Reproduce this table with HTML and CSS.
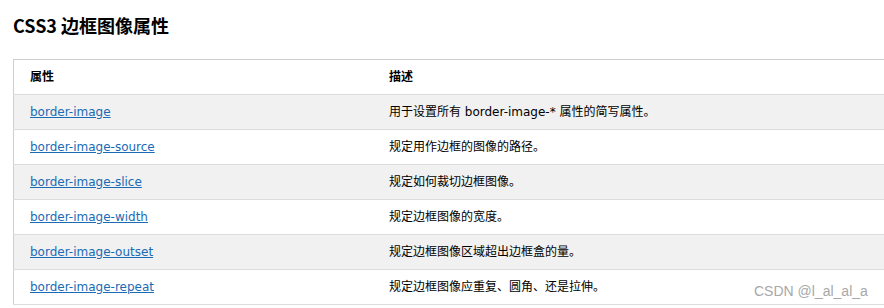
FILE: index.html
```html
<!DOCTYPE html>
<html lang="zh">
<head>
<meta charset="utf-8">
<title>CSS3 边框图像属性</title>
<link rel="stylesheet" href="styles.css">
</head>
<body>
<div class="page">
  <h2 class="title">CSS3 边框图像属性</h2>
  <table class="ref">
    <thead>
      <tr><th class="c1">属性</th><th class="c2">描述</th></tr>
    </thead>
    <tbody>
      <tr class="alt"><td><a href="#">border-image</a></td><td>用于设置所有 border-image-* 属性的简写属性。</td></tr>
      <tr><td><a href="#">border-image-source</a></td><td>规定用作边框的图像的路径。</td></tr>
      <tr class="alt"><td><a href="#">border-image-slice</a></td><td>规定如何裁切边框图像。</td></tr>
      <tr><td><a href="#">border-image-width</a></td><td>规定边框图像的宽度。</td></tr>
      <tr class="alt"><td><a href="#">border-image-outset</a></td><td>规定边框图像区域超出边框盒的量。</td></tr>
      <tr><td><a href="#">border-image-repeat</a></td><td>规定边框图像应重复、圆角、还是拉伸。</td></tr>
    </tbody>
  </table>
  <span class="watermark">CSDN @l_al_al_a</span>
</div>
</body>
</html>
```
FILE: styles.css
```css
html, body {
  margin: 0;
  padding: 0;
  background: #fff;
  overflow: hidden;
}
.page {
  position: relative;
  padding: 13px 0 0 13px;
  width: 871px;
  height: 295px;
  font-family: "DejaVu Sans", "Noto Sans CJK SC", sans-serif;
  color: #000;
}
.title {
  margin: 0 0 21px;
  font-size: 18px;
  line-height: 25px;
  font-weight: bold;
  font-family: "Noto Sans CJK SC", sans-serif;
}
.ref {
  border-collapse: collapse;
  width: 880px;
  border-top: 1px solid #cfcfcf;
  border-left: 1px solid #cfcfcf;
  border-bottom: 1px solid #dcdcdc;
  font-size: 12px;
}
.ref th, .ref td {
  height: 34px;
  padding: 0 16px;
  text-align: left;
  vertical-align: middle;
  border-top: 1px solid #dcdcdc;
  line-height: 16px;
}
.ref th {
  font-weight: bold;
  border-top: none;
}
.ref .c1 {
  width: 327px;
}
.ref tr.alt td {
  background: #f1f1f1;
}
.ref a {
  color: #1a6bb5;
  text-decoration: underline;
}
.watermark {
  position: absolute;
  left: 754px;
  top: 283px;
  font-family: "Liberation Sans", Arial, sans-serif;
  font-size: 14px;
  line-height: 16px;
  color: #a8a8a8;
}
```
